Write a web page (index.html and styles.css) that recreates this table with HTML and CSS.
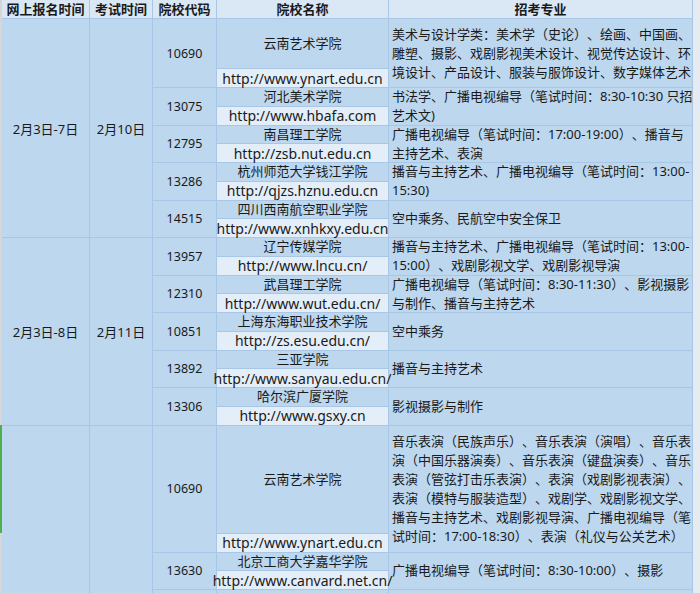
FILE: index.html
```html
<!DOCTYPE html>
<html lang="zh-CN">
<head>
<meta charset="utf-8">
<title>招考信息</title>
<link rel="stylesheet" href="styles.css">
</head>
<body>
<div class="page">
  <div class="sheet">
    <div class="c1 hd">网上报名时间</div>
    <div class="c2 hd">考试时间</div>
    <div class="c3 hd">院校代码</div>
    <div class="c4 hd">院校名称</div>
    <div class="c5 hd center">招考专业</div>

    <!-- group 1 -->
    <div class="c1 span10 mid">2月3日-7日</div>
    <div class="c2 span10 mid">2月10日</div>
    <div class="c3 span2 code">10690</div>
    <div class="c4 name">云南艺术学院</div>
    <div class="c5 span2 major">美术与设计学类：美术学（史论）、绘画、中国画、<br>雕塑、摄影、戏剧影视美术设计、视觉传达设计、环<br>境设计、产品设计、服装与服饰设计、数字媒体艺术</div>
    <div class="c4 url">http://www.ynart.edu.cn</div>

    <div class="c3 span2 code">13075</div>
    <div class="c4 name">河北美术学院</div>
    <div class="c5 span2 major">书法学、广播电视编导（笔试时间：8:30-10:30 只招<br>艺术文)</div>
    <div class="c4 url">http://www.hbafa.com</div>

    <div class="c3 span2 code">12795</div>
    <div class="c4 name">南昌理工学院</div>
    <div class="c5 span2 major">广播电视编导（笔试时间：17:00-19:00）、播音与<br>主持艺术、表演</div>
    <div class="c4 url">http://zsb.nut.edu.cn</div>

    <div class="c3 span2 code">13286</div>
    <div class="c4 name">杭州师范大学钱江学院</div>
    <div class="c5 span2 major">播音与主持艺术、广播电视编导（笔试时间：13:00-<br>15:30)</div>
    <div class="c4 url">http://qjzs.hznu.edu.cn</div>

    <div class="c3 span2 code">14515</div>
    <div class="c4 name">四川西南航空职业学院</div>
    <div class="c5 span2 major">空中乘务、民航空中安全保卫</div>
    <div class="c4 url">http://www.xnhkxy.edu.cn</div>

    <!-- group 2 -->
    <div class="c1 span10 mid">2月3日-8日</div>
    <div class="c2 span10 mid">2月11日</div>
    <div class="c3 span2 code">13957</div>
    <div class="c4 name">辽宁传媒学院</div>
    <div class="c5 span2 major">播音与主持艺术、广播电视编导（笔试时间：13:00-<br>15:00）、戏剧影视文学、戏剧影视导演</div>
    <div class="c4 url">http://www.lncu.cn/</div>

    <div class="c3 span2 code">12310</div>
    <div class="c4 name">武昌理工学院</div>
    <div class="c5 span2 major">广播电视编导（笔试时间：8:30-11:30）、影视摄影<br>与制作、播音与主持艺术</div>
    <div class="c4 url">http://www.wut.edu.cn/</div>

    <div class="c3 span2 code">10851</div>
    <div class="c4 name">上海东海职业技术学院</div>
    <div class="c5 span2 major">空中乘务</div>
    <div class="c4 url">http://zs.esu.edu.cn/</div>

    <div class="c3 span2 code">13892</div>
    <div class="c4 name">三亚学院</div>
    <div class="c5 span2 major">播音与主持艺术</div>
    <div class="c4 url">http://www.sanyau.edu.cn/</div>

    <div class="c3 span2 code">13306</div>
    <div class="c4 name">哈尔滨广厦学院</div>
    <div class="c5 span2 major">影视摄影与制作</div>
    <div class="c4 url">http://www.gsxy.cn</div>

    <!-- group 3 -->
    <div class="c1 span5 mid"></div>
    <div class="c2 span5 mid"></div>
    <div class="c3 span2 code">10690</div>
    <div class="c4 name">云南艺术学院</div>
    <div class="c5 span2 major">音乐表演（民族声乐）、音乐表演（演唱）、音乐表<br>演（中国乐器演奏）、音乐表演（键盘演奏）、音乐<br>表演（管弦打击乐表演）、表演（戏剧影视表演）、<br>表演（模特与服装造型）、戏剧学、戏剧影视文学、<br>播音与主持艺术、戏剧影视导演、广播电视编导（笔<br>试时间：17:00-18:30）、表演（礼仪与公关艺术）</div>
    <div class="c4 url">http://www.ynart.edu.cn</div>

    <div class="c3 span2 code">13630</div>
    <div class="c4 name">北京工商大学嘉华学院</div>
    <div class="c5 span2 major">广播电视编导（笔试时间：8:30-10:00）、摄影</div>
    <div class="c4 url">http://www.canvard.net.cn/</div>

    <div class="c3 code"></div>
    <div class="c4 name"></div>
    <div class="c5 major"></div>
  </div>
  <div class="select-mark"></div>
</div>
</body>
</html>
```

FILE: styles.css
```css
html, body {
  margin: 0;
  padding: 0;
}
body {
  width: 700px;
  height: 593px;
  overflow: hidden;
  background: #e6ebf1;
  font-family: "Noto Sans", "Noto Sans CJK SC", sans-serif;
  font-size: 13px;
  color: #1a1a1a;
  text-spacing-trim: space-all;
  font-feature-settings: normal;
}
.page {
  position: relative;
  height: 593px;
  overflow: hidden;
  padding-left: 2px;
  background: linear-gradient(to right, #d6d6d6 0, #d6d6d6 2px, transparent 2px);
}
.sheet {
  display: grid;
  width: 690px;
  grid-template-columns: 87px 62px 63px 171px 303px;
  grid-template-rows: 18px 49px 18px repeat(9, 17.75px 17.75px) 107px 18px 17.75px 17.75px 40px;
  gap: 1px;
  padding-right: 1px;
  background: #a8c7e6;
}
.sheet > div {
  background: #bdd7ee;
  display: flex;
  align-items: center;
  justify-content: center;
  white-space: nowrap;
  min-width: 0;
}
.c1 { grid-column: 1; }
.c2 { grid-column: 2; }
.c3 { grid-column: 3; }
.c4 { grid-column: 4; }
.c5 { grid-column: 5; }
.span2 { grid-row: span 2; }
.span5 { grid-row: span 5; }
.span10 { grid-row: span 10; }

.sheet > .hd {
  background: #dae7f4;
  font-family: "Noto Sans CJK SC", sans-serif;
  font-weight: 700;
  font-size: 13px;
  line-height: 18px;
}
.mid {
  font-size: 13px;
}
.code {
  font-size: 12.5px;
}
.name {
  font-size: 13px;
  line-height: 17px;
}
.sheet > .url {
  background: #e3eef9;
  font-size: 14px;
  line-height: 17px;
  overflow: visible;
  position: relative;
  z-index: 1;
}
.sheet > .major {
  justify-content: flex-start;
  padding-left: 3px;
  line-height: 19px;
  font-size: 13px;
}
.sheet > .center {
  justify-content: center;
  padding-left: 0;
}
.select-mark {
  position: absolute;
  left: 0;
  top: 425px;
  width: 2px;
  height: 108px;
  background: #4caf50;
}
```
